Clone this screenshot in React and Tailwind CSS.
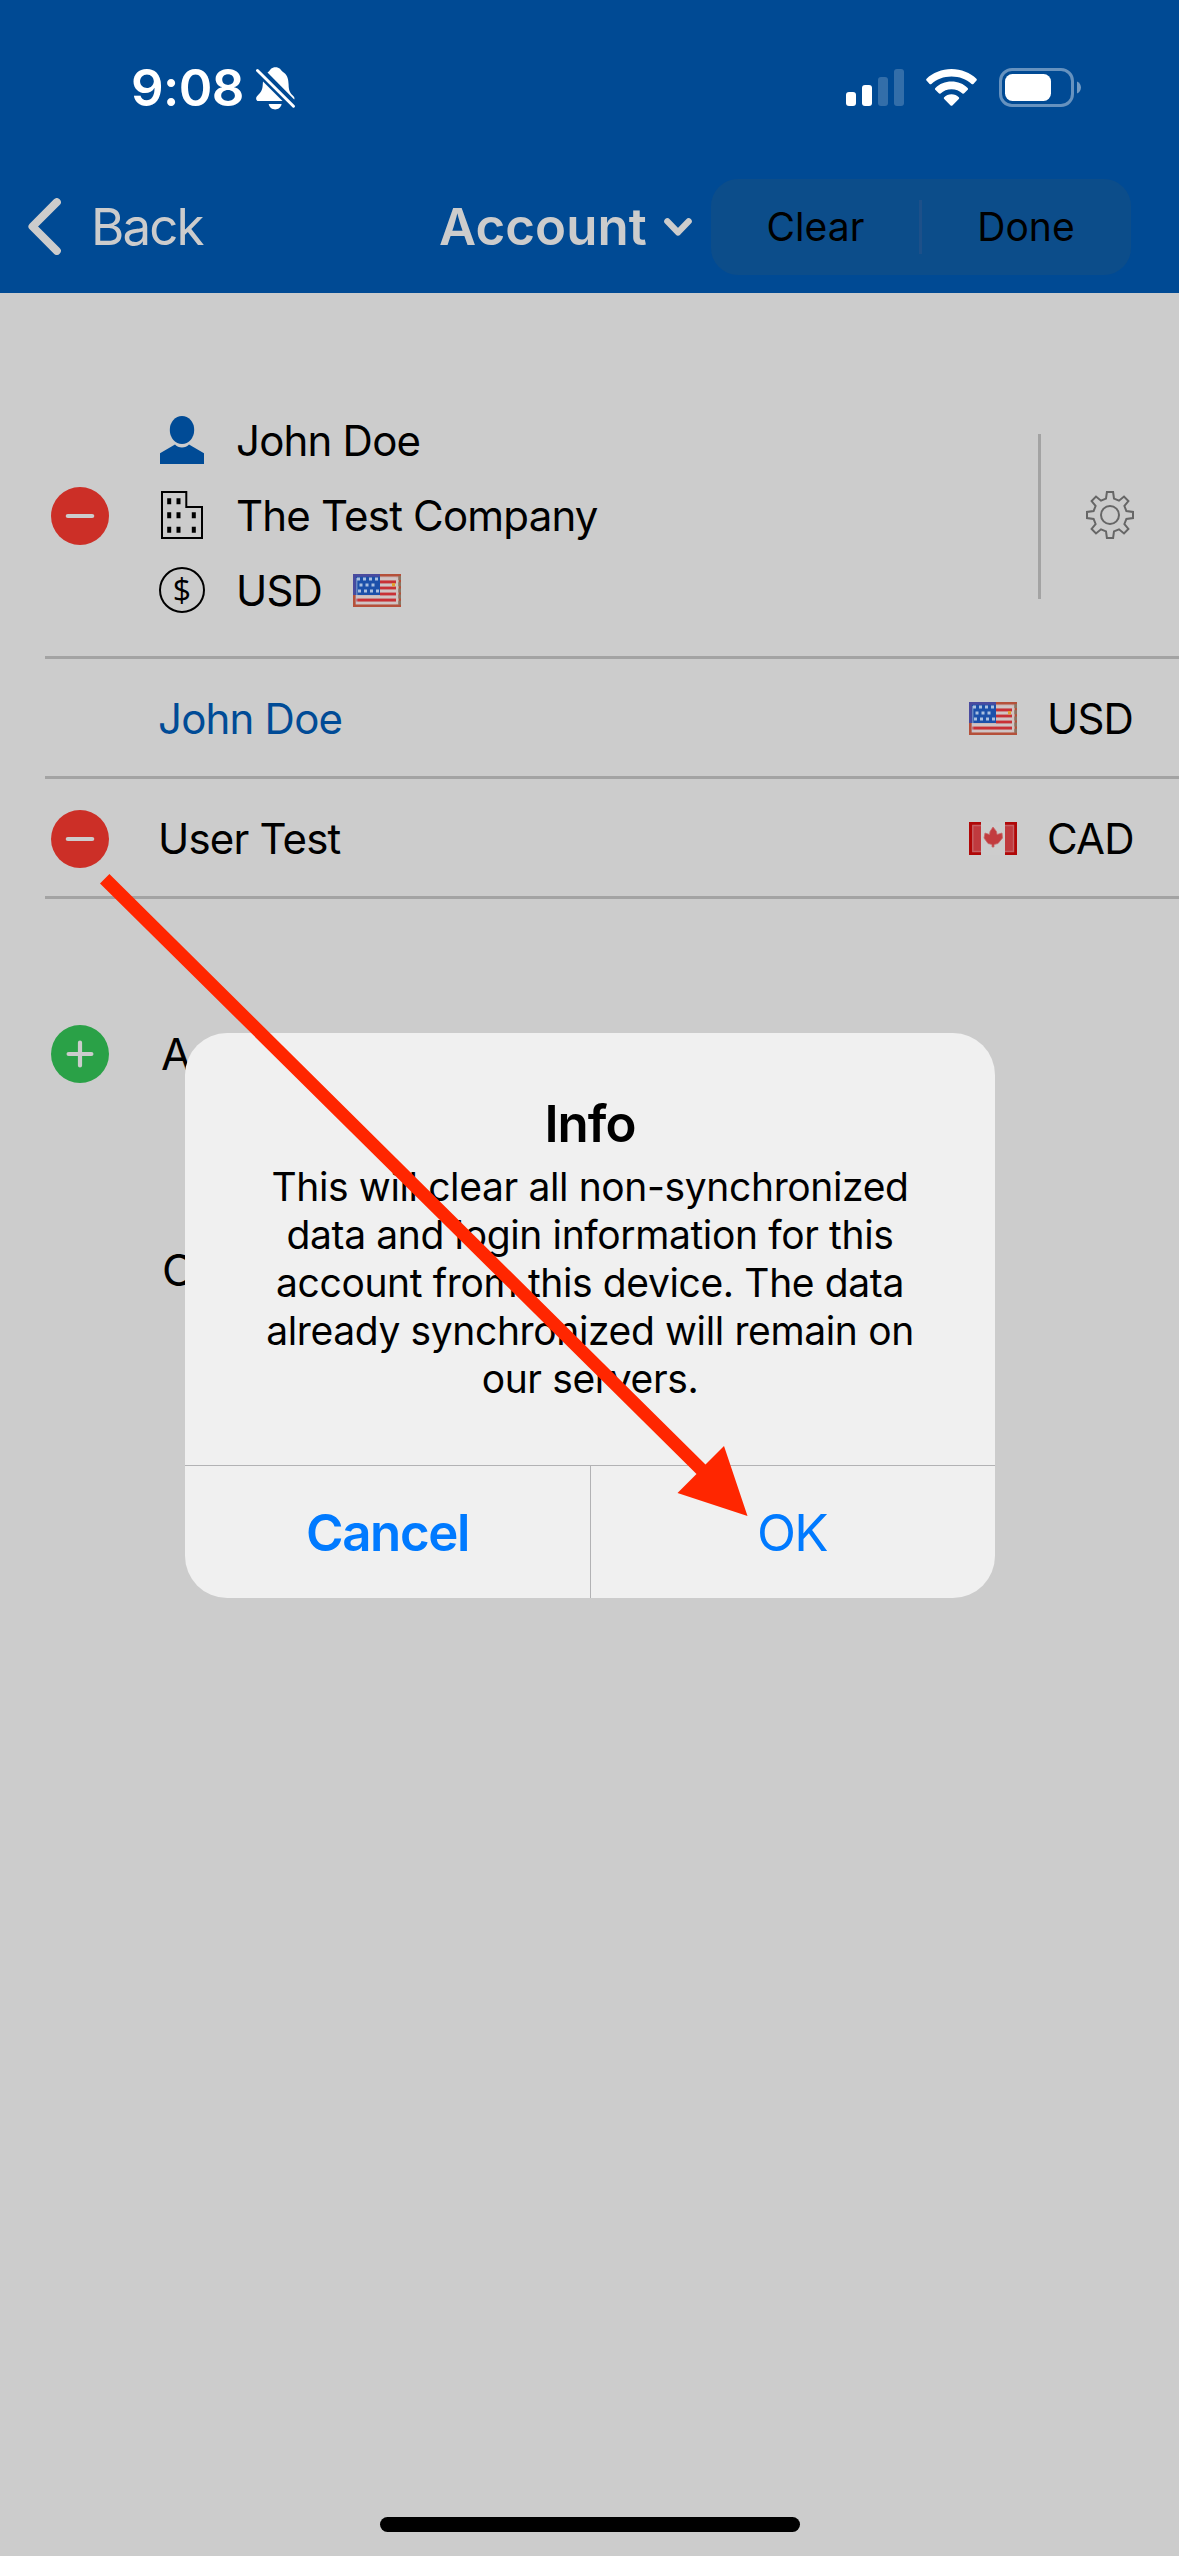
import { useState } from 'react'

const ACCOUNTS = [
  { name: 'John Doe', currency: 'USD', active: true },
  { name: 'User Test', currency: 'CAD', active: false },
]

function BellOffIcon() {
  return (
    <svg viewBox="0 0 39 43" className="h-[43px] w-[39px]" fill="#fff">
      <path d="M11.5 5.5 C13 4.8 14 3.2 15 1.8 C17 -0.3 22 -0.3 24 1.8 C25 3.2 26 4.7 28 5.8 C31.5 8.5 32.5 12.5 32.6 17.5 C32.7 24 34 25.8 37.5 29.3 C38.5 30.5 38.7 31.5 38.2 32.6 Z" />
      <path d="M7 14.5 L26.5 34 L2.5 34 C0 34 -0.6 30.8 1 29.2 C5 25.5 6.6 23 6.8 17 Z" />
      <path d="M12.7 37 H25.6 C24.5 44.2 13.8 44.2 12.7 37 Z" />
      <path d="M1.5 3.5 L37.5 39.3" stroke="#fff" strokeWidth="2.9" strokeLinecap="round" />
    </svg>
  )
}

function SignalIcon() {
  return (
    <svg viewBox="0 0 58 37" className="h-[37px] w-[58px]" fill="#fff">
      <rect x="0" y="23" width="10" height="14" rx="3" />
      <rect x="16" y="16" width="10" height="21" rx="3" />
      <rect x="32" y="8" width="10" height="29" rx="3" opacity="0.2" />
      <rect x="48" y="0" width="10" height="37" rx="3" opacity="0.2" />
    </svg>
  )
}

function WifiIcon() {
  return (
    <svg viewBox="0 0 51 37" className="h-[37px] w-[51px]" fill="#fff">
      <path d="M25.5 0 C35.3 0 44.2 3.8 50.4 9.7 C51 10.3 51 11 50.5 11.6 L47.4 14.9 C46.9 15.5 46.2 15.5 45.6 14.9 C40.3 10.2 33.3 7.5 25.5 7.5 C17.7 7.5 10.7 10.2 5.4 14.9 C4.8 15.5 4.1 15.5 3.6 14.9 L0.5 11.6 C0 11 0 10.3 0.6 9.7 C6.8 3.8 15.7 0 25.5 0 Z" />
      <path d="M25.5 12.6 C31.9 12.6 37.5 15 41.6 18.9 C42.2 19.5 42.2 20.2 41.7 20.8 L38.2 24.3 C37.7 24.9 37 24.9 36.4 24.4 C33.5 21.7 29.7 20.2 25.5 20.2 C21.3 20.2 17.5 21.7 14.6 24.4 C14 24.9 13.3 24.9 12.8 24.3 L9.3 20.8 C8.8 20.2 8.8 19.5 9.4 18.9 C13.5 15 19.1 12.6 25.5 12.6 Z" />
      <path d="M25.5 25.3 C28.4 25.3 31 26.4 32.8 28.2 C33.4 28.8 33.3 29.4 32.8 29.9 L26.4 36.4 C25.8 37 25.2 37 24.6 36.4 L18.2 29.9 C17.7 29.4 17.6 28.8 18.2 28.2 C20 26.4 22.6 25.3 25.5 25.3 Z" />
    </svg>
  )
}

function BatteryIcon() {
  return (
    <svg viewBox="0 0 82 39" className="h-[39px] w-[82px]" fill="#fff">
      <rect x="1.5" y="1.5" width="72" height="36" rx="11.5" fill="none" stroke="#fff" strokeWidth="3" opacity="0.4" />
      <rect x="6" y="6" width="46" height="27" rx="7.5" />
      <path d="M78 13.5 C83.3 15.5 83.3 23.5 78 25.5 Z" opacity="0.45" />
    </svg>
  )
}

function PersonIcon() {
  return (
    <svg viewBox="0 0 44 48" className="h-12 w-11" fill="#004b96">
      <ellipse cx="22" cy="14" rx="12.2" ry="14" />
      <path d="M15 28.6 C18 32.6 26 32.6 29 28.6 L44 37.2 V48 H0 V37.2 Z" />
    </svg>
  )
}

function BuildingIcon() {
  return (
    <svg viewBox="0 0 42 48" className="h-12 w-[42px]">
      <path d="M1 1 H25.3 V16 H41 V47 H1 Z" fill="none" stroke="#000" strokeWidth="2" />
      <path
        d="M6.2 7.2h4v6h-4z M15.5 7.2h4v6h-4z M6.2 21.3h4v6h-4z M15.5 21.3h4v6h-4z M30.8 21.3h4v6h-4z M6.2 35.8h4v6h-4z M15.5 35.8h4v6h-4z M30.8 35.8h4v6h-4z"
        fill="#000"
      />
    </svg>
  )
}

function DollarIcon() {
  return (
    <span className="flex h-[46px] w-[46px] items-center justify-center rounded-full border-2 border-black pb-px font-['Open_Sans',sans-serif] text-[32px] leading-none tracking-normal">
      $
    </span>
  )
}

function GearIcon() {
  return (
    <svg viewBox="0 0 48 48" className="h-12 w-12" fill="none" stroke="#666" strokeWidth="2">
      <path d="M20.9 1 H27.1 L28 7.6 L33 9.7 L38 5.6 L42.4 10 L38.4 15 L40.4 20 L47 20.9 V27.1 L40.4 28 L38.4 33 L42.4 38 L38 42.4 L33 38.3 L28 40.4 L27.1 47 H20.9 L20 40.4 L15 38.3 L10 42.4 L5.6 38 L9.6 33 L7.6 28 L1 27.1 V20.9 L7.6 20 L9.6 15 L5.6 10 L10 5.6 L15 9.7 L20 7.6 Z" />
      <circle cx="24" cy="24" r="9" />
    </svg>
  )
}

function UsFlag() {
  return (
    <svg viewBox="0 0 48 33" className="h-[33px] w-12">
      <rect width="48" height="33" fill="#c9b5b4" />
      <path d="M27 8H43 M27 14H43 M27 20H43 M3 26H43" stroke="#c93035" strokeWidth="3" />
      <path d="M27 4.8H43 M27 11H43 M27 17H43 M3 23H43 M3 29.2H43" stroke="#d0c4c4" strokeWidth="2.4" />
      <path d="M1.3 21V31.8H47V1.3H27" fill="none" stroke="#b5503a" strokeWidth="2.6" />
      <path d="M46.7 2V33" stroke="#8a7460" strokeWidth="2.6" strokeDasharray="4 2.2" />
      <path d="M44 4V30" stroke="#d0c8c5" strokeWidth="1.6" />
      <rect width="27" height="21" fill="#1c50aa" />
      <path d="M0 1.4H27 M1.4 0V21" stroke="#4a4b9f" strokeWidth="2.8" />
      <path d="M4 5H27 M6.5 11H22 M5 17H27" stroke="#a9bfe0" strokeWidth="2.8" strokeDasharray="3 3" />
      <path d="M3.8 4V30" stroke="#b9c4dc" strokeWidth="1.2" opacity="0.6" />
      <rect x="39" y="9" width="3" height="3.4" fill="#e0a030" />
    </svg>
  )
}

function CaFlag() {
  return (
    <svg viewBox="0 0 48 33" className="h-[33px] w-12">
      <rect width="48" height="33" fill="#b00808" />
      <path d="M3 3H12V30H3Z M36 3H45V30H36Z" fill="#c03a3e" />
      <path d="M12 3.5H3.8V29.5H12 M36 3.5H44.5V29.5H36" fill="none" stroke="#c66064" strokeWidth="1.4" />
      <rect x="12" width="24" height="33" fill="#cdcdcd" />
      <path d="M24 5 L27.5 9.5 L28 12.5 L33 11 L33.5 16 L29 21.5 L25 22.5 V25 H23 V22.5 L19 21.5 L15 16 L16 11 L20.5 12.5 L21 9.5 Z" fill="#c23c3f" stroke="#c8686a" strokeWidth="0.8" />
    </svg>
  )
}

const FLAGS = { USD: UsFlag, CAD: CaFlag }

function RoundButton({ plus, onClick }) {
  return (
    <button
      type="button"
      onClick={onClick}
      className={`flex h-[58px] w-[58px] shrink-0 items-center justify-center rounded-full ${plus ? 'bg-[#2aa147]' : 'bg-[#cc2f27]'}`}
    >
      <svg viewBox="0 0 30 30" className="h-[30px] w-[30px]" stroke="#ccc" strokeWidth="4.2" strokeLinecap="round">
        <path d={plus ? 'M3.6 15H26.4 M15 3.6V26.4' : 'M2.8 15H27.2'} />
      </svg>
    </button>
  )
}

function StatusBar() {
  return (
    <div className="flex h-[164px] items-start pl-[131px] pr-[98px] text-white">
      <span className="mt-[56px] w-[111px] whitespace-nowrap text-[51px] font-semibold leading-[64px] tracking-[-0.6px]">9:08</span>
      <span className="ml-[14px] mt-[67px]">
        <BellOffIcon />
      </span>
      <div className="ml-auto mt-[68px] flex h-[39px] items-center">
        <SignalIcon />
        <span className="ml-[22px]">
          <WifiIcon />
        </span>
        <span className="ml-[22px]">
          <BatteryIcon />
        </span>
      </div>
    </div>
  )
}

function NavBar() {
  return (
    <div className="flex h-[129px] items-start pl-7 pr-12 text-[#ccc]">
      <svg viewBox="0 0 33 57" className="mt-[34px] h-[57px] w-[33px]" fill="none" stroke="#ccc" strokeWidth="8" strokeLinecap="round" strokeLinejoin="round">
        <path d="M28.8 4.2L4.5 28.5L28.8 52.8" />
      </svg>
      <span className="ml-[30px] mt-[31px] w-[348px] text-[51px] leading-[64px] tracking-[-1.9px]">Back</span>
      <span className="mt-[31px] w-[225px] text-[51px] font-semibold leading-[64px] tracking-[0.1px]">Account</span>
      <svg viewBox="0 0 28 19" className="mt-[54px] h-[19px] w-7" fill="none" stroke="#ccc" strokeWidth="6.4" strokeLinecap="round" strokeLinejoin="round">
        <path d="M3.4 3.4L14 14.4L24.6 3.4" />
      </svg>
      <div className="ml-auto mt-[15px] flex h-24 w-[420px] items-center rounded-[27px] bg-[#0c4d8a] text-[39px] text-black">
        <span className="w-[208px] pl-px pt-px text-center tracking-[0.1px]">Clear</span>
        <span className="h-[54px] w-[3px] bg-[#1d5089]" />
        <span className="flex-1 pr-px pt-px text-center tracking-[0.1px]">Done</span>
      </div>
    </div>
  )
}

function InfoLine({ icon, children }) {
  return (
    <div className="flex h-[75px] items-center">
      <span className="flex w-[46px] justify-center">{icon}</span>
      <span className="ml-[31px] flex items-center">{children}</span>
    </div>
  )
}

function ConfirmDialog({ onClose }) {
  return (
    <div className="absolute left-[185px] top-[1033px] flex h-[565px] w-[810px] flex-col overflow-hidden rounded-[42px] bg-[#f0f0f0] text-black">
      <div className="flex h-[432px] flex-col items-center pt-[58px] text-center">
        <h2 className="text-[51px] font-semibold leading-[66px] tracking-[-1px]">Info</h2>
        <p className="mt-[6px] whitespace-nowrap text-[39px] leading-[48px] tracking-[-0.37px]">
          This will clear all non-synchronized
          <br />
          data and login information for this
          <br />
          account from this device. The data
          <br />
          already synchronized will remain on
          <br />
          our servers.
        </p>
      </div>
      <div className="flex flex-1 border-t border-[#b2b2b4] text-[51px] text-[#007aff]">
        <button type="button" onClick={onClose} className="w-[406px] border-r border-[#b2b2b4] pt-[2px] font-semibold tracking-[-1.4px]">
          Cancel
        </button>
        <button type="button" onClick={onClose} className="flex-1 pr-[2px] pt-[2px] tracking-[-1.6px]">
          OK
        </button>
      </div>
    </div>
  )
}

export default function App() {
  const [open, setOpen] = useState(true)

  return (
    <div className="relative flex h-[2556px] w-[1179px] flex-col overflow-hidden bg-[#ccc] font-[Inter,'Liberation_Sans',sans-serif] text-[42px] text-black">
      <header className="h-[293px] bg-[#004a94]">
        <StatusBar />
        <NavBar />
      </header>

      {/* Current account */}
      <section className="ml-[45px] mt-[83px] flex h-[283px] items-center border-b-[3px] border-[#a3a3a3] pl-[6px]">
        <RoundButton onClick={() => setOpen(true)} />
        <div className="mb-[2px] ml-[50px] w-[879px] tracking-[-0.8px]">
          <InfoLine icon={<PersonIcon />}>John Doe</InfoLine>
          <InfoLine icon={<BuildingIcon />}>The Test Company</InfoLine>
          <InfoLine icon={<DollarIcon />}>
            <span className="w-[117px]">USD</span>
            <UsFlag />
          </InfoLine>
        </div>
        <span className="h-[165px] w-[3px] bg-[#a3a3a3]" />
        <span className="mb-[2px] ml-[45px]">
          <GearIcon />
        </span>
      </section>

      {/* Other accounts */}
      {ACCOUNTS.map(({ name, currency, active }) => {
        const Flag = FLAGS[currency]
        return (
          <section key={name} className="ml-[45px] flex h-[120px] items-center border-b-[3px] border-[#a3a3a3] pl-[6px] pr-[47px] pt-[2px] tracking-[-0.8px]">
            {active ? <span className="w-[58px]" /> : <RoundButton onClick={() => setOpen(true)} />}
            <span className={`ml-[49px] flex-1 ${active ? 'text-[#004b96]' : ''}`}>{name}</span>
            <Flag />
            <span className="ml-[30px] w-[85px] text-right">{currency}</span>
          </section>
        )
      })}

      <section className="ml-[51px] mt-[96px] flex h-[117px] items-center text-[44px]">
        <RoundButton plus />
        <span className="ml-[52px]">A</span>
      </section>
      <section className="ml-[162px] mt-[99px] flex h-[117px] items-center text-[44px]">C</section>

      <div className="mx-auto mb-6 mt-auto h-[15px] w-[420px] rounded-full bg-black" />

      {open && <ConfirmDialog onClose={() => setOpen(false)} />}

      {/* Pointer from the delete button to OK */}
      <svg viewBox="0 0 1179 2556" className="pointer-events-none absolute inset-0 h-full w-full" fill="#ff2600">
        <path d="M109.4 874 L705.5 1464.6 L724 1446 L747.5 1516 L677.5 1493 L696.5 1474 L100 883.4 Z" />
      </svg>
    </div>
  )
}
